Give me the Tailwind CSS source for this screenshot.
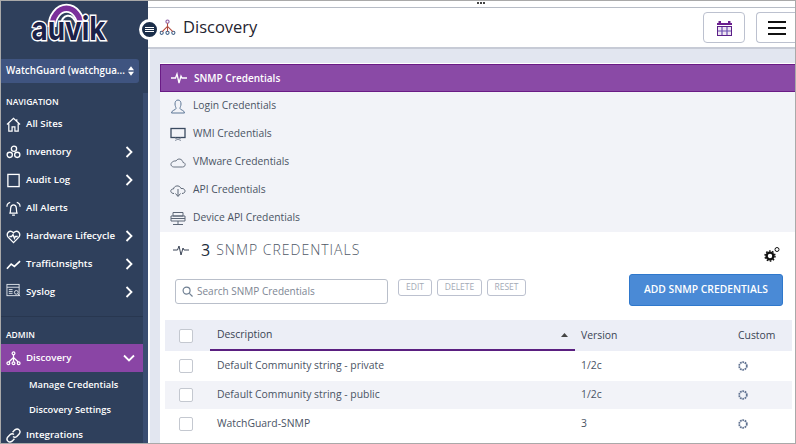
<!DOCTYPE html>
<html>
<head>
<meta charset="utf-8">
<script src="https://cdn.jsdelivr.net/npm/@tailwindcss/browser@4"></script>
</head>
<body class="m-0 overflow-hidden">
<div class="relative flex w-[796px] h-[444px] overflow-hidden bg-white font-['Open_Sans','Noto_Sans',sans-serif] border border-[#a9a9a9]">
  <!-- sidebar -->
  <aside class="relative flex flex-col w-[147px] h-full shrink-0 overflow-hidden bg-[#2f405c] text-white pr-[5px] *:shrink-0">
    <div class="h-[51px] pl-[26px]">
      <svg width="84" height="50" viewBox="0 0 84 50">
        <path d="M25 26 A14 18 0 0 1 54 26" fill="none" stroke="#fff" stroke-width="9"/>
        <path d="M25 26 A14 18 0 0 1 54 26" fill="none" stroke="#7b2f9b" stroke-width="5.500"/>
        <path d="M34 24 C35 13 45 11 49 22" fill="none" stroke="#fff" stroke-width="2"/>
        <text x="41.500" y="39" text-anchor="middle" font-family="Inter, sans-serif" font-size="33" font-weight="700" fill="#1b2148" stroke="#fff" stroke-width="3" paint-order="stroke" textLength="74" lengthAdjust="spacingAndGlyphs">auvik</text>
      </svg>
    </div>
    <div class="mt-[7px] h-[24px] w-[138px] rounded-r-[3px] bg-[#3f5480] flex items-center pl-[5px] pr-[5px] text-[9.800px] font-semibold">
      <span class="flex-1 whitespace-nowrap">WatchGuard (watchgua...</span>
      <svg width="6" height="12" viewBox="0 0 7 12" fill="#fff"><path d="M3.500 0.500 7 5H0ZM3.500 11.500 0 7H7Z"/></svg>
    </div>
    <div class="mt-[12px] pl-[5px] h-[14px] flex items-center text-[8.500px] font-semibold leading-none">NAVIGATION</div>
    <nav class="mt-px flex flex-col text-[9.700px] font-semibold">
      <div class="h-[28px] flex items-center pl-[5px]">
        <svg class="w-[15px] h-[15px] mr-[5px]" viewBox="0 0 16 16" fill="none" stroke="#fff" stroke-width="1.300"><path d="M1 8 8 1.500 15 8M3 7V15H6.500V10.500H9.500V15H13V7M11.500 2.500V5"/></svg>
        <span>All Sites</span>
      </div>
      <div class="h-[28px] flex items-center pl-[5px]">
        <svg class="w-[15px] h-[15px] mr-[5px]" viewBox="0 0 16 16" fill="none" stroke="#fff" stroke-width="1.400"><circle cx="8.500" cy="4" r="2.800"/><circle cx="4" cy="10.500" r="2.800"/><circle cx="12" cy="10.500" r="2.800"/></svg>
        <span class="flex-1">Inventory</span>
        <svg class="w-[8px] h-[12px] mr-[10px]" viewBox="0 0 8 12" fill="none" stroke="#fff" stroke-width="1.800"><path d="M1.500 1 6.500 6 1.500 11"/></svg>
      </div>
      <div class="h-[28px] flex items-center pl-[5px]">
        <svg class="w-[15px] h-[15px] mr-[5px]" viewBox="0 0 16 16" fill="none" stroke="#fff" stroke-width="1.400"><rect x="2" y="1.500" width="12" height="13"/></svg>
        <span class="flex-1">Audit Log</span>
        <svg class="w-[8px] h-[12px] mr-[10px]" viewBox="0 0 8 12" fill="none" stroke="#fff" stroke-width="1.800"><path d="M1.500 1 6.500 6 1.500 11"/></svg>
      </div>
      <div class="h-[28px] flex items-center pl-[5px]">
        <svg class="w-[15px] h-[15px] mr-[5px]" viewBox="0 0 16 16" fill="none" stroke="#fff" stroke-width="1.300"><path d="M4.500 13 5 7.500C5.300 3 10.700 3 11 7.500L11.500 13ZM3.500 13H12.500M6.500 15H9.500M1 6C1 3.500 2.500 2 4.500 1.500M15 6C15 3.500 13.500 2 11.500 1.500"/></svg>
        <span>All Alerts</span>
      </div>
      <div class="h-[28px] flex items-center pl-[5px]">
        <svg class="w-[15px] h-[15px] mr-[5px]" viewBox="0 0 16 16" fill="none" stroke="#fff" stroke-width="1.400"><path d="M8 14.500 2.500 9C-0.500 5 3.500 0 8 4 12.500 0 16.500 5 13.500 9ZM3.500 8H6L7.500 6 9 10 10 8H12.500"/></svg>
        <span class="flex-1 whitespace-nowrap">Hardware Lifecycle</span>
        <svg class="w-[8px] h-[12px] mr-[10px]" viewBox="0 0 8 12" fill="none" stroke="#fff" stroke-width="1.800"><path d="M1.500 1 6.500 6 1.500 11"/></svg>
      </div>
      <div class="h-[28px] flex items-center pl-[5px]">
        <svg class="w-[15px] h-[15px] mr-[5px]" viewBox="0 0 16 16" fill="none" stroke="#fff" stroke-width="1.800"><path d="M1 12.500 5.500 7.500 9 10 15 4.500"/></svg>
        <span class="flex-1">TrafficInsights</span>
        <svg class="w-[8px] h-[12px] mr-[10px]" viewBox="0 0 8 12" fill="none" stroke="#fff" stroke-width="1.800"><path d="M1.500 1 6.500 6 1.500 11"/></svg>
      </div>
      <div class="h-[28px] flex items-center pl-[5px]">
        <svg class="w-[15px] h-[15px] mr-[5px] -mt-[3px]" viewBox="0 0 16 16" fill="none" stroke="#dfe3ea" stroke-width="1"><rect x="1" y="1.500" width="13" height="12"/><path d="M1 4.500H14M3 7H7M3 9H7M3 11H7"/><circle cx="11" cy="10" r="2"/><path d="M12.500 11.500 15 14"/></svg>
        <span class="flex-1">Syslog</span>
        <svg class="w-[8px] h-[12px] mr-[10px]" viewBox="0 0 8 12" fill="none" stroke="#fff" stroke-width="1.800"><path d="M1.500 1 6.500 6 1.500 11"/></svg>
      </div>
    </nav>
    <div class="mt-[10px] h-px bg-[#283750]"></div>
    <div class="mt-[11px] pl-[5px] h-[14px] flex items-center text-[8.500px] font-semibold leading-none">ADMIN</div>
    <div class="mt-[2px] text-[9.700px] font-semibold">
      <div class="h-[28px] flex items-center pl-[5px] bg-[#8a45a5]">
        <svg class="w-[15px] h-[15px] mr-[5px]" viewBox="0 0 16 16" fill="none" stroke="#fff" stroke-width="1.300"><circle cx="8" cy="2.500" r="1.500"/><circle cx="2.500" cy="13" r="1.500"/><circle cx="8" cy="13" r="1.500"/><circle cx="13.500" cy="13" r="1.500"/><path d="M8 4V11.500M8 7 3 11.800M8 7 13 11.800"/></svg>
        <span class="flex-1">Discovery</span>
        <svg class="w-[12px] h-[8px] mr-[8px]" viewBox="0 0 12 8" fill="none" stroke="#fff" stroke-width="1.800"><path d="M1 1.500 6 6.500 11 1.500"/></svg>
      </div>
      <div class="h-[25px] flex items-center pl-[28px] text-[9.300px] whitespace-nowrap">Manage Credentials</div>
      <div class="h-[25px] flex items-center pl-[28px] text-[9.300px] whitespace-nowrap">Discovery Settings</div>
      <div class="h-[27px] flex items-center pl-[5px]">
        <svg class="w-[15px] h-[15px] mr-[5px]" viewBox="0 0 16 16" fill="none" stroke="#fff" stroke-width="1.500"><path d="M7 4.500 9.500 2C11 .8 13 1 14 2S15.200 5 14 6.500L11.500 9C10 10.200 8.500 9.800 7.500 9M9 11.500 6.500 14C5 15.200 3 15 2 14S.8 11 2 9.500L4.500 7C6 5.800 7.500 6.200 8.500 7"/></svg>
        <span>Integrations</span>
      </div>
    </div>
    <div class="absolute right-0 top-[92px] bottom-0 w-[5px] bg-[#3a4d70]"></div>
  </aside>
  <!-- main -->
  <main class="flex-1 min-w-0 flex flex-col bg-white text-[#2f3a4c]">
    <div class="h-[7px] shrink-0 border-b border-[#b7bcc6] relative">
      <div class="absolute left-[329px] top-[1px] flex gap-px"><i class="block w-[2px] h-[2px] bg-[#444]"></i><i class="block w-[2px] h-[2px] bg-[#444]"></i><i class="block w-[2px] h-[2px] bg-[#444]"></i></div>
    </div>
    <header class="h-[41px] shrink-0 flex items-center border-b-2 border-[#c7cbd6] pl-[11px]">
      <svg class="w-[17px] h-[17px] mr-[7px]" viewBox="0 0 16 16" fill="none" stroke="#7c4b8f" stroke-width="1"><circle cx="8" cy="2.500" r="1.500" stroke="#8a5aa0"/><circle cx="2.500" cy="13" r="1.500" stroke="#3d5f86"/><circle cx="8" cy="13" r="1.500" stroke="#3d5f86"/><circle cx="13.500" cy="13" r="1.500" stroke="#3d5f86"/><path d="M8 4V11.500M8 7 3 11.800M8 7 13 11.800" stroke="#b04a3d"/></svg>
      <h1 class="text-[16.500px] font-normal text-[#1f2430] leading-none">Discovery</h1>
      <div class="ml-auto flex gap-[11px]">
        <div class="w-[42px] h-[31px] rounded-[4px] border border-[#bcc1cf] flex items-center justify-center">
          <svg width="15" height="16" viewBox="0 0 15 16"><path d="M0 3H15V5H0Z" fill="#6b1f8e"/><rect x="1.500" y="1" width="2.500" height="2.500" fill="#6b1f8e"/><rect x="11" y="1" width="2.500" height="2.500" fill="#6b1f8e"/><rect x=".5" y="6.500" width="14" height="9" fill="#efe6f2" stroke="#5b1f88"/><path d="M5 7V15M10 7V15M1 11H14" stroke="#6b4fb0" stroke-width="1.200"/></svg>
        </div>
        <div class="w-[39px] h-[31px] rounded-l-[4px] border border-r-0 border-[#bcc1cf] flex items-center pl-[11px]">
          <div class="flex flex-col gap-[4px] w-[18px]"><i class="block h-[2px] bg-[#111]"></i><i class="block h-[2px] bg-[#111]"></i><i class="block h-[2px] bg-[#111]"></i></div>
        </div>
      </div>
    </header>
    <div class="flex-1 min-h-0 bg-[#e2e6f0] border-l-2 border-white pl-[10px] pt-[14px]">
      <div class="h-full bg-white pt-px flex flex-col">
        <div class="h-[28px] shrink-0 flex items-center bg-[#8a4aa6] border-y border-[#6a1b85] border-l pl-[10px] text-white text-[10px] font-semibold">
          <svg class="w-[16px] h-[14px] mr-[7px]" viewBox="0 0 16 14" fill="none" stroke="#fff" stroke-width="1.300"><path d="M0 7H4.500L6 3 8 12 10 5 11 7H16"/></svg>
          <span>SNMP Credentials</span>
        </div>
        <div class="bg-[#f2f3f8] h-[140px] shrink-0 flex flex-col text-[10.300px] text-[#4a5364]">
          <div class="h-[28px] flex items-center pl-[10px]">
            <svg class="w-[16px] h-[15px] mr-[7px]" viewBox="0 0 16 15" fill="none" stroke="#5d7696"><path d="M8 1C5.800 1 5 3 5 5 5 7 6 8 6 9.500 6 11 1.500 11 1.500 14H14.500C14.500 11 10 11 10 9.500 10 8 11 7 11 5 11 3 10.200 1 8 1Z"/></svg>
            <span>Login Credentials</span>
          </div>
          <div class="h-[28px] flex items-center pl-[10px]">
            <svg class="w-[16px] h-[15px] mr-[7px]" viewBox="0 0 16 15" fill="none" stroke="#3a4a60"><rect x="1" y="1.500" width="14" height="9" stroke-width="1.300"/><path d="M5 13.500 11 11M11 13.500 5 11" stroke="#8a93a3"/></svg>
            <span>WMI Credentials</span>
          </div>
          <div class="h-[28px] flex items-center pl-[10px]">
            <svg class="w-[16px] h-[15px] mr-[7px]" viewBox="0 0 16 15" fill="none" stroke="#6b7483"><path d="M4 12H12.500C16 12 16 7.500 13 7.500 12.500 4 8 2.500 6 6 3 5.500 .5 8 1 10 1.500 11.500 3 12 4 12Z"/></svg>
            <span>VMware Credentials</span>
          </div>
          <div class="h-[28px] flex items-center pl-[10px]">
            <svg class="w-[16px] h-[15px] mr-[7px]" viewBox="0 0 16 15" fill="none" stroke="#5c6676"><path d="M4 10.500C1 10.500 0 8 1.500 6.500 2 6 3 6 3.500 6 4 2.500 9.500 1.500 11 5.500 14 5 16 7.500 14.500 9.500 14 10 13 10.500 12 10.500M8 6V13M5.500 10.500 8 13.500 10.500 10.500"/></svg>
            <span>API Credentials</span>
          </div>
          <div class="h-[28px] flex items-center pl-[10px]">
            <svg class="w-[16px] h-[15px] mr-[7px]" viewBox="0 0 16 15" fill="none" stroke="#5c6676"><path d="M3 1.500H13V5H3ZM1 5H15V10H1ZM8 10V13M3 13.500H13M1 7.500H15"/></svg>
            <span>Device API Credentials</span>
          </div>
        </div>
        <div class="h-[36px] shrink-0 flex items-center pl-[13px]">
          <svg class="w-[16px] h-[14px] mr-[12px]" viewBox="0 0 16 14" fill="none" stroke="#3a4456"><path d="M0 7H4.500L6 3 8 12 10 5 11 7H16"/></svg>
          <span class="text-[16px] text-[#222b3a] mr-[6px] leading-none">3</span>
          <span class="text-[14px] font-light tracking-[1px] text-[#4f5866] leading-none">SNMP CREDENTIALS</span>
        </div>
        <div class="h-[52px] shrink-0 relative flex items-start pl-[15px] pt-[11px]">
          <svg class="absolute right-[15px] -top-[22px]" width="16" height="16" viewBox="0 0 16 16" fill="none" stroke="#111"><circle cx="6" cy="10" r="3.400" stroke-width="2.400"/><circle cx="6" cy="10" r="5" stroke-width="1.400" stroke-dasharray="1.600 1.540"/><circle cx="13" cy="3.500" r="2" stroke-width="1"/></svg>
          <div class="w-[213px] h-[25px] rounded-[3px] border border-[#b9bfca] flex items-center pl-[6px] text-[10px] text-[#7d8694] shrink-0 box-border">
            <svg class="w-[11px] h-[11px] mr-[4px]" viewBox="0 0 12 12" fill="none" stroke="#6f7f92" stroke-width="1.300"><circle cx="5" cy="5" r="3.800"/><path d="M8 8 11.500 11.500"/></svg>
            <span class="whitespace-nowrap">Search SNMP Credentials</span>
          </div>
          <div class="flex gap-[5px] ml-[10px] text-[8.500px] text-[#a3aab6]">
            <div class="w-[34px] h-[17px] rounded-[3px] border border-[#bcc1cf] flex items-center justify-center">EDIT</div>
            <div class="w-[45px] h-[17px] rounded-[3px] border border-[#bcc1cf] flex items-center justify-center">DELETE</div>
            <div class="w-[39px] h-[17px] rounded-[3px] border border-[#bcc1cf] flex items-center justify-center">RESET</div>
          </div>
          <div class="absolute right-[12px] top-[6px] w-[154px] h-[32px] rounded-[3px] bg-[#4a8ad6] border border-[#2f78cc] text-white text-[10.300px] font-semibold flex items-center justify-center whitespace-nowrap">ADD SNMP CREDENTIALS</div>
        </div>
        <div class="flex-1 min-h-0 ml-[5px] mr-[3px] text-[10.400px]">
          <div class="h-[31px] bg-[#eceef6] grid grid-cols-[45px_365px_1fr_54px] items-stretch text-[#3a4454]">
            <div class="flex items-center pl-[14px]"><i class="block w-[14px] h-[14px] rounded-[2px] border border-[#c4c8d0] bg-white"></i></div>
            <div class="relative flex items-center pl-[7px] border-b-2 border-[#5a1f80]">Description
              <svg class="absolute right-[7px] top-[13px]" width="7" height="4" viewBox="0 0 7 4" fill="#444"><path d="M3.500 0 7 4H0Z"/></svg>
            </div>
            <div class="flex items-center pl-[6px]">Version</div>
            <div class="flex items-center">Custom</div>
          </div>
          <div class="h-[30px] pb-px grid grid-cols-[45px_365px_1fr_54px] items-center text-[#4a5364]">
            <div class="pl-[14px]"><i class="block w-[14px] h-[14px] rounded-[2px] border border-[#c4c8d0] bg-white"></i></div>
            <div class="pl-[7px]">Default Community string - private</div>
            <div class="pl-[6px]">1/2c</div>
            <div class="flex"><svg width="10" height="10" viewBox="0 0 10 10" fill="none" stroke="#5f7190" stroke-width="1.800" stroke-dasharray="1.700 .7"><circle cx="5" cy="5" r="3.800"/></svg></div>
          </div>
          <div class="h-[28px] bg-[#f2f3f8] grid grid-cols-[45px_365px_1fr_54px] items-center text-[#4a5364]">
            <div class="pl-[14px]"><i class="block w-[14px] h-[14px] rounded-[2px] border border-[#c4c8d0] bg-white"></i></div>
            <div class="pl-[7px]">Default Community string - public</div>
            <div class="pl-[6px]">1/2c</div>
            <div class="flex"><svg width="10" height="10" viewBox="0 0 10 10" fill="none" stroke="#5f7190" stroke-width="1.800" stroke-dasharray="1.700 .7"><circle cx="5" cy="5" r="3.800"/></svg></div>
          </div>
          <div class="h-[29px] grid grid-cols-[45px_365px_1fr_54px] items-center text-[#4a5364]">
            <div class="pl-[14px]"><i class="block w-[14px] h-[14px] rounded-[2px] border border-[#c4c8d0] bg-white"></i></div>
            <div class="pl-[7px]">WatchGuard-SNMP</div>
            <div class="pl-[6px]">3</div>
            <div class="flex"><svg width="10" height="10" viewBox="0 0 10 10" fill="none" stroke="#5f7190" stroke-width="1.800" stroke-dasharray="1.700 .7"><circle cx="5" cy="5" r="3.800"/></svg></div>
          </div>
        </div>
      </div>
    </div>
  </main>
  <!-- sidebar toggle overlay -->
  <div class="absolute left-[138px] top-[18px] w-[21px] h-[21px] rounded-full bg-[#1b2e4a] border-[3px] border-white flex flex-col items-center justify-center gap-px">
    <i class="block w-[9px] h-px bg-white"></i><i class="block w-[9px] h-px bg-white"></i><i class="block w-[9px] h-px bg-white"></i>
  </div>
</div>
</body>
</html>
